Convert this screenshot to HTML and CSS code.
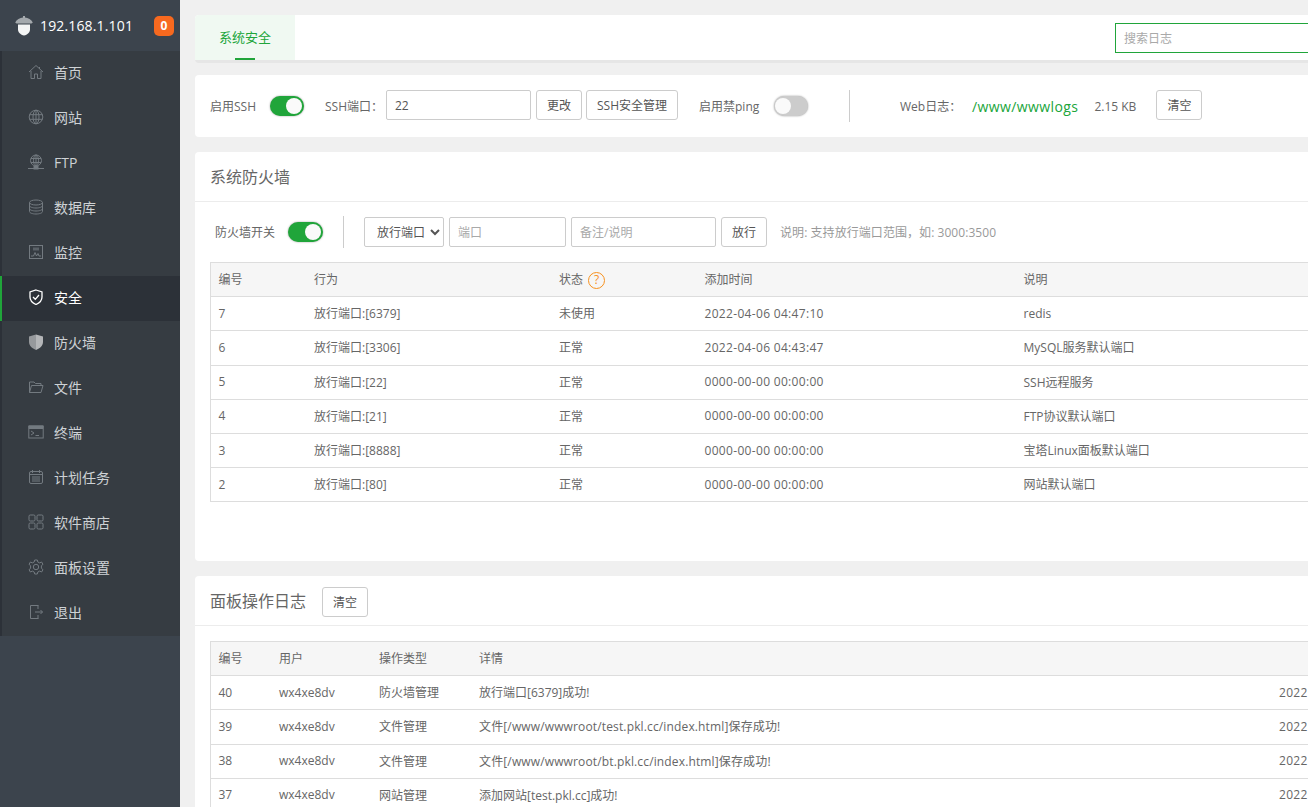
FILE: index.html
```html
<!DOCTYPE html>
<html lang="zh-CN">
<head>
    <meta charset="UTF-8">
    <title>安全</title>
    <link rel="stylesheet" href="styles.css">
</head>
<body>
    <aside class="sidebar">
        <div class="brand">
            <svg class="brand-icon" viewBox="0 0 18 20"><path d="M8 0 H10 V1.500 C13 2 16.500 3.500 17.800 6.500 L16.500 7.500 H1.500 L0.200 6.500 C1.500 3.500 5 2 8 1.500 Z" fill="#a4a9ad"/><path d="M3 8.500 H15 V13.500 C15 16.500 12.500 18.800 9 19.500 C5.500 18.800 3 16.500 3 13.500 Z" fill="#f4f5f5"/></svg>
            <span class="brand-ip">192.168.1.101</span>
            <span class="badge">0</span>
        </div>
        <ul class="menu">
            <li><svg viewBox="0 0 16 16"><path d="M1 8 L8 1.500 L15 8 M3 7 V14.500 H6.500 V10 H9.500 V14.500 H13 V7 M11.500 3 V5"/></svg>首页</li>
            <li><svg viewBox="0 0 16 16"><circle cx="8" cy="8" r="6.800"/><ellipse cx="8" cy="8" rx="3" ry="6.800"/><path d="M1.500 5.700 H14.500 M1.500 10.300 H14.500 M8 1 V15"/></svg>网站</li>
            <li><svg viewBox="0 0 16 16"><circle cx="8" cy="6.500" r="5.500"/><ellipse cx="8" cy="6.500" rx="2.500" ry="5.500"/><path d="M3 4.500 H13 M3 8.500 H13 M8 1 V12 M0 14.500 H16"/><rect x="6" y="12.500" width="4" height="2.500" fill="#737a80"/></svg>FTP</li>
            <li><svg viewBox="0 0 16 16"><ellipse cx="8" cy="3.500" rx="6.500" ry="2.500"/><path d="M1.500 3.500 V12.500 C1.500 14 4.500 15 8 15 C11.500 15 14.500 14 14.500 12.500 V3.500 M1.500 6.500 C1.500 8 4.500 9 8 9 C11.500 9 14.500 8 14.500 6.500 M1.500 9.500 C1.500 11 4.500 12 8 12 C11.500 12 14.500 11 14.500 9.500"/></svg>数据库</li>
            <li><svg viewBox="0 0 16 16"><rect x="1.500" y="1.500" width="13" height="13"/><path d="M3 12 H5.500 L7 8.500 L8.500 12 L10 9.500 L11 12 H13"/><rect x="5" y="3.500" width="6" height="3" class="faint"/></svg>监控</li>
            <li class="active"><svg viewBox="0 0 16 16"><path d="M8 1 L14 3 V8 C14 11.500 11.500 14 8 15.500 C4.500 14 2 11.500 2 8 V3 Z M5 8 L7.300 10.300 L11 6"/></svg>安全</li>
            <li><svg viewBox="0 0 16 16"><path class="solid" d="M8 0.500 L8 16 C4 14.500 1 11.500 1 8 V2.500 Z"/><path class="solid-light" d="M8 0.500 L15 2.500 V8 C15 11.500 12 14.500 8 16 Z"/></svg>防火墙</li>
            <li><svg viewBox="0 0 16 16"><path d="M1.500 13.500 V3 H6 L7.500 4.500 H13 V6.500 M1.500 13.500 L3.500 6.500 H15 L13 13.500 Z"/></svg>文件</li>
            <li><svg viewBox="0 0 16 16"><rect x="0.800" y="2" width="14.400" height="12"/><path class="bar" d="M1 2 H15 V4.500 H1 Z"/><path d="M3 7 L6 9 L3 11 M7.500 11.500 H11"/></svg>终端</li>
            <li><svg viewBox="0 0 16 16"><rect x="1.500" y="2.500" width="13" height="12" rx="1.500"/><path d="M1.500 5.500 H14.500 M4.500 1 V4 M11.500 1 V4 M4 8 H12 M4 10 H12 M4 12 H12"/></svg>计划任务</li>
            <li><svg viewBox="0 0 16 16"><rect x="1" y="1" width="6" height="6" rx="1.200"/><rect x="9" y="1" width="6" height="6" rx="1.200"/><rect x="1" y="9" width="6" height="6" rx="1.200"/><rect x="9" y="9" width="6" height="6" rx="1.200"/></svg>软件商店</li>
            <li><svg viewBox="0 0 16 16"><path d="M6.700 1 H9.300 L9.800 3 L11.700 3.900 L13.600 3 L15 5.300 L13.400 6.700 V9.300 L15 10.700 L13.600 13 L11.700 12.100 L9.800 13 L9.300 15 H6.700 L6.200 13 L4.300 12.100 L2.400 13 L1 10.700 L2.600 9.300 V6.700 L1 5.300 L2.400 3 L4.300 3.900 L6.200 3 Z"/><circle cx="8" cy="8" r="2.700"/></svg>面板设置</li>
            <li><svg viewBox="0 0 16 16"><path d="M10.500 1.500 H2.500 V14.500 H10.500 M10 5 V1.500 M10 11 V14.500 M7 8 H14.500 M12.500 6 L14.500 8 L12.500 10"/></svg>退出</li>
        </ul>
    </aside>

    <main class="content">
        <section class="card tabs">
            <div class="tab">系统安全</div>
            <input class="log-search" type="text" placeholder="搜索日志">
        </section>

        <section class="card settings">
            <span class="label ssh-label">启用SSH</span>
            <span class="switch on"></span>
            <span class="label port-label">SSH端口：</span>
            <input class="field port" type="text" value="22">
            <button class="btn">更改</button>
            <button class="btn ssh-btn">SSH安全管理</button>
            <span class="label ping-label">启用禁ping</span>
            <span class="switch"></span>
            <span class="divider"></span>
            <span class="label web-log">Web日志：</span>
            <a class="log-path">/www/wwwlogs</a>
            <span class="label log-size">2.15 KB</span>
            <button class="btn">清空</button>
        </section>

        <section class="card firewall">
            <h2 class="card-title">系统防火墙</h2>
            <div class="card-body">
                <div class="toolbar">
                    <span class="label">防火墙开关</span>
                    <span class="switch on"></span>
                    <span class="divider"></span>
                    <select class="field rule-type"><option>放行端口</option></select>
                    <input class="field rule-port" type="text" placeholder="端口">
                    <input class="field rule-note" type="text" placeholder="备注/说明">
                    <button class="btn">放行</button>
                    <span class="hint">说明: 支持放行端口范围，如: 3000:3500</span>
                </div>
                <table class="grid fw-grid">
                    <thead>
                        <tr><th>编号</th><th>行为</th><th>状态 <span class="help">?</span></th><th>添加时间</th><th>说明</th></tr>
                    </thead>
                    <tbody>
                        <tr><td>7</td><td>放行端口:[6379]</td><td>未使用</td><td class="time">2022-04-06 04:47:10</td><td>redis</td></tr>
                        <tr><td>6</td><td>放行端口:[3306]</td><td>正常</td><td class="time">2022-04-06 04:43:47</td><td>MySQL服务默认端口</td></tr>
                        <tr><td>5</td><td>放行端口:[22]</td><td>正常</td><td class="time">0000-00-00 00:00:00</td><td>SSH远程服务</td></tr>
                        <tr><td>4</td><td>放行端口:[21]</td><td>正常</td><td class="time">0000-00-00 00:00:00</td><td>FTP协议默认端口</td></tr>
                        <tr><td>3</td><td>放行端口:[8888]</td><td>正常</td><td class="time">0000-00-00 00:00:00</td><td>宝塔Linux面板默认端口</td></tr>
                        <tr><td>2</td><td>放行端口:[80]</td><td>正常</td><td class="time">0000-00-00 00:00:00</td><td>网站默认端口</td></tr>
                    </tbody>
                </table>
            </div>
        </section>

        <section class="card panel-log">
            <h2 class="card-title">面板操作日志 <button class="btn">清空</button></h2>
            <div class="card-body">
                <table class="grid log-grid">
                    <thead>
                        <tr><th>编号</th><th>用户</th><th>操作类型</th><th>详情</th><th></th></tr>
                    </thead>
                    <tbody>
                        <tr><td>40</td><td>wx4xe8dv</td><td>防火墙管理</td><td>放行端口[6379]成功!</td><td class="time">2022</td></tr>
                        <tr><td>39</td><td>wx4xe8dv</td><td>文件管理</td><td class="file-path">文件[/www/wwwroot/test.pkl.cc/index.html]保存成功!</td><td class="time">2022</td></tr>
                        <tr><td>38</td><td>wx4xe8dv</td><td>文件管理</td><td class="file-path">文件[/www/wwwroot/bt.pkl.cc/index.html]保存成功!</td><td class="time">2022</td></tr>
                        <tr><td>37</td><td>wx4xe8dv</td><td>网站管理</td><td>添加网站[test.pkl.cc]成功!</td><td class="time">2022</td></tr>
                    </tbody>
                </table>
            </div>
        </section>
    </main>
</body>
</html>
```

FILE: styles.css
```css
* {
    margin: 0;
    padding: 0;
    box-sizing: border-box;
}

html, body {
    height: 807px;
    overflow: hidden;
}

body {
    display: flex;
    font-family: "Open Sans", "Noto Sans CJK SC", sans-serif;
    font-size: 12px;
    color: #666;
    background-color: #f0f0f0;
}

/* sidebar */
.sidebar {
    width: 180px;
    flex: none;
    background-color: #3c444d;
}

.brand {
    display: flex;
    align-items: center;
    height: 51px;
    padding-left: 15px;
}

.brand-icon {
    width: 18px;
    height: 20px;
}

.brand-ip {
    margin-left: 7px;
    font-size: 14px;
    letter-spacing: 0.15px;
    color: #fff;
}

.badge {
    margin-left: 21px;
    width: 20px;
    height: 20px;
    border-radius: 5px;
    background-color: #f7691f;
    color: #fff;
    font-size: 12px;
    font-weight: bold;
    line-height: 20px;
    text-align: center;
}

.menu {
    list-style: none;
    height: 585px;
    background-color: #363c42;
    border-left: 2px solid #2c3138;
}

.menu li {
    display: flex;
    align-items: center;
    height: 45px;
    padding-left: 26px;
    padding-bottom: 3px;
    font-size: 14px;
    color: #ced2d5;
}

.menu svg {
    width: 16px;
    height: 16px;
    margin-right: 10px;
    fill: none;
    stroke: #737a80;
    stroke-width: 1;
}

.menu li.active {
    margin-left: -2px;
    border-left: 2px solid #20a53a;
    background-color: #2c3138;
    color: #fff;
}

.menu li.active svg {
    stroke: #fff;
    stroke-width: 1.300;
}

.menu .solid {
    fill: #96999c;
    stroke: none;
}

.menu .solid-light {
    fill: #b4b6b8;
    stroke: none;
}

.menu .bar, .menu .faint {
    fill: #737a80;
}

.menu .faint {
    stroke: none;
    opacity: 0.6;
}

/* cards */
.content {
    width: 1400px;
    flex: none;
    padding: 15px 0 0 15px;
}

.card {
    background-color: #fff;
    border-radius: 4px 0 0 4px;
    margin-bottom: 15px;
}

.tabs {
    display: flex;
    height: 45px;
    justify-content: space-between;
    align-items: center;
    box-shadow: 0 3px 0 #e6e6e6;
}

.tab {
    position: relative;
    width: 100px;
    height: 45px;
    background-color: #f0f9f2;
    font-size: 13px;
    color: #20a53a;
    line-height: 45px;
    text-align: center;
    border-radius: 4px 0 0 0;
}

.tab::after {
    content: "";
    position: absolute;
    left: 40px;
    bottom: 0;
    width: 20px;
    height: 2px;
    background-color: #20a53a;
}

.log-search {
    width: 280px;
    height: 30px;
    margin-right: 185px;
    margin-top: 1px;
    padding-left: 8px;
    border: 1px solid #20a53a;
    font: inherit;
}

::placeholder {
    color: #a9a9a9;
}

.settings {
    display: flex;
    align-items: center;
    height: 62px;
    padding-left: 15px;
}

.settings .btn, .settings .port {
    margin-bottom: 2px;
}

.label {
    flex: none;
    color: #666;
    white-space: nowrap;
}

.ssh-label {
    width: 47px;
}

.switch {
    position: relative;
    width: 34px;
    height: 20px;
    margin-left: 13px;
    border-radius: 10px;
    background-color: #ccc;
    box-shadow: 0 0 2px #999;
}

.switch::after {
    content: "";
    position: absolute;
    top: 2px;
    left: 1px;
    width: 16px;
    height: 16px;
    border-radius: 50%;
    background-color: #fafafa;
}

.switch.on {
    background-color: #20a53a;
}

.switch.on::after {
    left: 16px;
}

.port-label {
    width: 61px;
    margin-left: 21px;
}

.field {
    height: 30px;
    border: 1px solid #ccc;
    border-radius: 2px;
    padding-left: 8px;
    font: inherit;
    color: #555;
    background-color: #fff;
}

.port {
    width: 145px;
}

.btn {
    height: 30px;
    margin-left: 5px;
    padding: 0 10px;
    border: 1px solid #ccc;
    border-radius: 3px;
    background-color: #fff;
    font-family: inherit;
    font-size: 12px;
    line-height: normal;
    color: #555;
}

.ssh-btn {
    margin-left: 4px;
}

.ping-label {
    width: 62px;
    margin-left: 21px;
}

.divider {
    width: 1px;
    height: 32px;
    margin-left: 41px;
    background-color: #ccc;
}

.web-log {
    width: 62px;
    margin-left: 50px;
}

.log-path {
    margin-left: 10px;
    font-size: 14px;
    letter-spacing: 0.4px;
    color: #20a53a;
}

.log-size {
    margin-left: 16px;
}

.settings .btn:last-child {
    margin-left: 20px;
}

.firewall {
    height: 409px;
}

.card-title {
    height: 50px;
    padding-left: 15px;
    border-bottom: 1px solid #ececec;
    font-size: 16px;
    font-weight: normal;
    line-height: 50px;
    color: #666;
}

.card-body {
    padding: 15px 0 0 15px;
}

.toolbar {
    display: flex;
    align-items: center;
    height: 30px;
    padding-left: 5px;
    margin-bottom: 15px;
}

.toolbar .switch {
    width: 35px;
    margin-left: 13px;
}

.toolbar .switch.on::after {
    left: 17px;
}

.toolbar .divider {
    margin-left: 20px;
    margin-right: 20px;
}

.rule-type {
    width: 80px;
    padding-left: 8px;
}

.rule-port {
    width: 117px;
    margin-left: 5px;
}

.rule-note {
    width: 145px;
    margin-left: 5px;
}

.hint {
    margin-left: 13px;
    letter-spacing: 0.06px;
    color: #999;
}

/* tables */
.grid {
    width: 1170px;
    table-layout: fixed;
    border-collapse: collapse;
    border: 1px solid #ddd;
    border-right: none;
}

.grid th, .grid td {
    height: 34.200px;
    padding: 0 8px 1px 7.500px;
    border-bottom: 1px solid #ddd;
    font-weight: normal;
    text-align: left;
    color: #666;
    white-space: nowrap;
}

.grid th {
    background-color: #f6f6f6;
}

.grid .time {
    letter-spacing: 0.32px;
}

.grid .file-path {
    letter-spacing: 0.14px;
}

.fw-grid th:nth-child(1) { width: 96px; }
.fw-grid th:nth-child(2) { width: 245px; }
.fw-grid th:nth-child(3) { width: 145.500px; }
.fw-grid th:nth-child(4) { width: 319px; }

.log-grid th:nth-child(1) { width: 61px; }
.log-grid th:nth-child(2) { width: 100px; }
.log-grid th:nth-child(3) { width: 100px; }
.log-grid th:nth-child(4) { width: 800px; }

.help {
    display: inline-block;
    width: 17px;
    height: 17px;
    margin-left: 2px;
    border: 1.500px solid #f7911e;
    border-radius: 50%;
    color: #f7911e;
    line-height: 14px;
    text-align: center;
}

.panel-log .card-title {
    display: flex;
    align-items: center;
    height: 50px;
}

.panel-log .btn {
    margin-left: 16px;
    margin-top: 2px;
}
```
